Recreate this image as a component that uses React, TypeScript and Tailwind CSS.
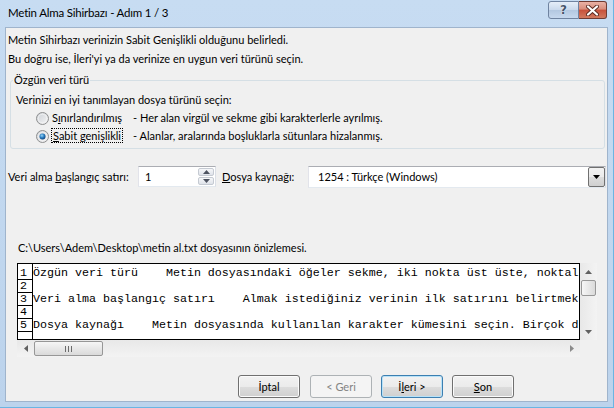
import React from "react";

function Radio({ checked }: { checked?: boolean }) {
  const id = checked ? "r1" : "r0";
  return (
    <svg width="13" height="13" viewBox="0 0 13 13" className="shrink-0">
      <defs>
        <linearGradient id={`${id}bg`} x1="0" y1="0" x2="1" y2="1">
          <stop offset="0" stopColor="#cbcfd5" />
          <stop offset="1" stopColor="#f6f6f6" />
        </linearGradient>
        <radialGradient id={`${id}dot`} cx="0.4" cy="0.35" r="0.7">
          <stop offset="0" stopColor="#9ad6f5" />
          <stop offset="0.5" stopColor="#2b7fc4" />
          <stop offset="1" stopColor="#0d3f74" />
        </radialGradient>
      </defs>
      <circle cx="6.5" cy="6.5" r="6" fill={`url(#${id}bg)`} stroke="#8e8f8f" strokeWidth="1" />
      <circle cx="6.5" cy="6.5" r="4.3" fill="none" stroke="#f4f4f4" strokeWidth="0.8" />
      {checked && <circle cx="6.5" cy="6.5" r="3" fill={`url(#${id}dot)`} />}
    </svg>
  );
}

function Tri({ dir, color = "#606060" }: { dir: "up" | "down" | "left" | "right"; color?: string }) {
  const pts = {
    up: "0,4 3.5,0 7,4",
    down: "0,0 7,0 3.5,4",
    left: "4,0 4,7 0,3.5",
    right: "0,0 0,7 4,3.5",
  }[dir];
  const w = dir === "up" || dir === "down" ? 7 : 4;
  const h = dir === "up" || dir === "down" ? 4 : 7;
  return (
    <svg width={w} height={h} viewBox={`0 0 ${w} ${h}`}>
      <polygon points={pts} fill={color} />
    </svg>
  );
}

function Btn({ children, kind = "normal" }: { children: React.ReactNode; kind?: "normal" | "default" | "disabled" }) {
  if (kind === "disabled") {
    return (
      <div className="w-[62px] h-[23px] rounded-[3px] border border-[#adb2b5] bg-[#f4f4f4] flex items-center justify-center text-[#838383]">
        {children}
      </div>
    );
  }
  return (
    <div
      className={`w-[62px] h-[23px] rounded-[3px] border flex items-center justify-center text-black bg-[linear-gradient(#f2f2f2_0%,#ebebeb_50%,#dddddd_50%,#cfcfcf_100%)] ${
        kind === "default"
          ? "border-[#3c7fb1] shadow-[inset_0_0_0_1px_#b8e2f8]"
          : "border-[#707070] shadow-[inset_0_0_0_1px_#fbfbfb]"
      }`}
    >
      {children}
    </div>
  );
}

const ROWS = [
  "Özgün veri türü    Metin dosyasındaki öğeler sekme, iki nokta üst üste, noktalı virgül, boşluk",
  "",
  "Veri alma başlangıç satırı    Almak istediğiniz verinin ilk satırını belirtmek için",
  "",
  "Dosya kaynağı    Metin dosyasında kullanılan karakter kümesini seçin. Birçok durumda",
  "",
];

export default function App() {
  return (
    <div className="w-[614px] h-[408px] flex flex-col bg-[linear-gradient(#c7dcf2,#bcd3ec)] border-r border-b border-[#6ab5e2] font-['Lato',sans-serif] text-[11px] leading-[16px] text-black overflow-hidden">
      {/* title bar */}
      <div className="h-[27px] flex items-start">
        <div className="ml-[8px] mt-[5px] text-[11.5px] tracking-[-0.2px] leading-[16px] text-black">Metin Alma Sihirbazı - Adım 1 / 3</div>
        <div className="ml-auto mr-[6px] mt-[1px] flex">
          <div className="w-[31px] h-[18px] rounded-l-[3px] border border-[#6f83a0] bg-[linear-gradient(#e5eef8_0%,#c9d9ec_50%,#b2c7e0_50%,#c6d8ee_100%)] flex items-center justify-center">
            <span className="font-['DejaVu_Sans',sans-serif] text-[12px] leading-none font-bold text-[#46566b] [text-shadow:0_0_1px_#fff,0_0_1px_#fff]">?</span>
          </div>
          <div className="w-[28px] h-[18px] rounded-r-[3px] border border-l-0 border-[#6f3b33] bg-[linear-gradient(#eab1a4_0%,#d88d7c_45%,#c7503a_50%,#d17a60_100%)] flex items-center justify-center">
            <svg width="13" height="11" viewBox="0 0 13 11">
              <path d="M2 1.5 L11 9.5 M11 1.5 L2 9.5" stroke="#5a2a22" strokeWidth="4" strokeLinecap="round" />
              <path d="M2 1.5 L11 9.5 M11 1.5 L2 9.5" stroke="#ffffff" strokeWidth="2.2" strokeLinecap="round" />
            </svg>
          </div>
        </div>
      </div>

      {/* client area */}
      <div className="flex-1 ml-[5px] mr-[5px] mb-[5px] bg-[#f0f0f0] border border-[#9fb4cc] flex flex-col whitespace-nowrap">
        <div className="ml-[2px] mt-[4px]">Metin Sihirbazı verinizin Sabit Genişlikli olduğunu belirledi.</div>
        <div className="ml-[2px] mt-[3px]">Bu doğru ise, İleri'yi ya da verinize en uygun veri türünü seçin.</div>

        <fieldset className="ml-[4px] mt-[5px] w-[595px] border border-[#d5dfe5] rounded-[3px] pb-[4px]">
          <legend className="ml-[2px] px-[1px]">Özgün veri türü</legend>
          <div className="ml-[5px] mt-[4px]">Verinizi en iyi tanımlayan dosya türünü seçin:</div>
          <div className="ml-[25px] mt-[2px] flex items-center h-[16px]">
            <Radio />
            <span className="ml-[3px] w-[81px]">
              S<span className="underline">ı</span>nırlandırılmış
            </span>
            <span>- Her alan virgül ve sekme gibi karakterlerle ayrılmış.</span>
          </div>
          <div className="ml-[25px] mt-[2px] flex items-center h-[16px]">
            <Radio checked />
            <span className="ml-[3px] w-[81px]">
              <span className="outline-1 outline-dotted outline-black px-[1px]">
                <span className="underline">S</span>abit genişlikli
              </span>
            </span>
            <span>- Alanlar, aralarında boşluklarla sütunlara hizalanmış.</span>
          </div>
        </fieldset>

        <div className="mt-[17px] h-[21px] flex items-center">
          <span className="ml-[2px] w-[130px]">
            Veri alma <span className="underline">b</span>aşlangıç satırı:
          </span>
          <div className="w-[78px] h-[21px] border border-[#abadb3] border-b-[#e3e9ef] border-l-[#e2e3ea] border-r-[#dbdfe6] bg-white flex">
            <span className="pl-[6px] flex-1 leading-[19px]">1</span>
            <div className="w-[16px] m-[1px] flex flex-col gap-[1px]">
              <div className="flex-1 rounded-[2px] border border-[#c5cad2] bg-[linear-gradient(#f6f7f9,#dfe3ea)] flex items-center justify-center">
                <Tri dir="up" color="#4d5360" />
              </div>
              <div className="flex-1 rounded-[2px] border border-[#c5cad2] bg-[linear-gradient(#f6f7f9,#dfe3ea)] flex items-center justify-center">
                <Tri dir="down" color="#4d5360" />
              </div>
            </div>
          </div>
          <span className="ml-[6px] w-[86px]">
            <span className="underline">D</span>osya kaynağı:
          </span>
          <div className="w-[298px] h-[22px] border border-[#abadb3] border-b-[#e3e9ef] border-l-[#e2e3ea] border-r-[#dbdfe6] bg-white flex items-center">
            <span className="pl-[9px] flex-1">1254 : Türkçe (Windows)</span>
            <div className="w-[17px] h-[20px] border border-[#707070] rounded-[2px] bg-[linear-gradient(#f2f2f2_0%,#ebebeb_50%,#dddddd_50%,#cfcfcf_100%)] flex items-center justify-center">
              <Tri dir="down" color="#000" />
            </div>
          </div>
        </div>

        <div className="ml-[12px] mt-[53px]">C:\Users\Adem\Desktop\metin al.txt dosyasının önizlemesi.</div>

        <div className="ml-[11px] mt-[7px] flex flex-col w-[580px]">
          <div className="flex">
            <div className="w-[563px] h-[77px] border border-black bg-white overflow-hidden font-['Liberation_Mono',monospace] text-[11.67px] leading-[13px]">
              <div className="flex flex-col">
                <div className="flex h-[3px]">
                  <div className="w-[15px] border-r border-black" />
                </div>
                {ROWS.map((r, i) => (
                  <div key={i} className="flex h-[13px]">
                    <div className="w-[15px] shrink-0 border-r border-b border-black pl-[2px] leading-[12px]">{i < 5 ? i + 1 : ""}</div>
                    <div className="whitespace-pre">{r}</div>
                  </div>
                ))}
              </div>
            </div>
            <div className="w-[17px] h-[77px] bg-[linear-gradient(90deg,#e8e8e8,#f3f3f3)] flex flex-col items-center">
              <div className="h-[17px] flex items-center justify-center">
                <Tri dir="up" />
              </div>
              <div className="w-[15px] h-[16px] rounded-[2px] border border-[#979797] bg-[linear-gradient(90deg,#f6f6f6,#dadada)]" />
              <div className="flex-1" />
              <div className="h-[17px] flex items-center justify-center">
                <Tri dir="down" />
              </div>
            </div>
          </div>
          <div className="w-[563px] h-[17px] bg-[linear-gradient(#e8e8e8,#f3f3f3)] flex items-center">
            <div className="w-[17px] flex items-center justify-center">
              <Tri dir="left" />
            </div>
            <div className="w-[69px] h-[15px] rounded-[2px] border border-[#979797] bg-[linear-gradient(#f6f6f6,#dadada)] flex items-center justify-center gap-[2px]">
              <div className="w-[1px] h-[6px] bg-[#6c6c6c]" />
              <div className="w-[1px] h-[6px] bg-[#6c6c6c]" />
              <div className="w-[1px] h-[6px] bg-[#6c6c6c]" />
            </div>
            <div className="flex-1" />
            <div className="w-[17px] flex items-center justify-center">
              <Tri dir="right" color="#8a8a8a" />
            </div>
          </div>
        </div>

        <div className="mt-[18px] ml-[232px] flex">
          <Btn>İptal</Btn>
          <div className="ml-[10px]">
            <Btn kind="disabled">&lt; Geri</Btn>
          </div>
          <div className="ml-[9px]">
            <Btn kind="default">
              İ<span className="underline">l</span>eri &gt;
            </Btn>
          </div>
          <div className="ml-[9px]">
            <Btn>
              <span className="underline">S</span>on
            </Btn>
          </div>
        </div>
      </div>
    </div>
  );
}
